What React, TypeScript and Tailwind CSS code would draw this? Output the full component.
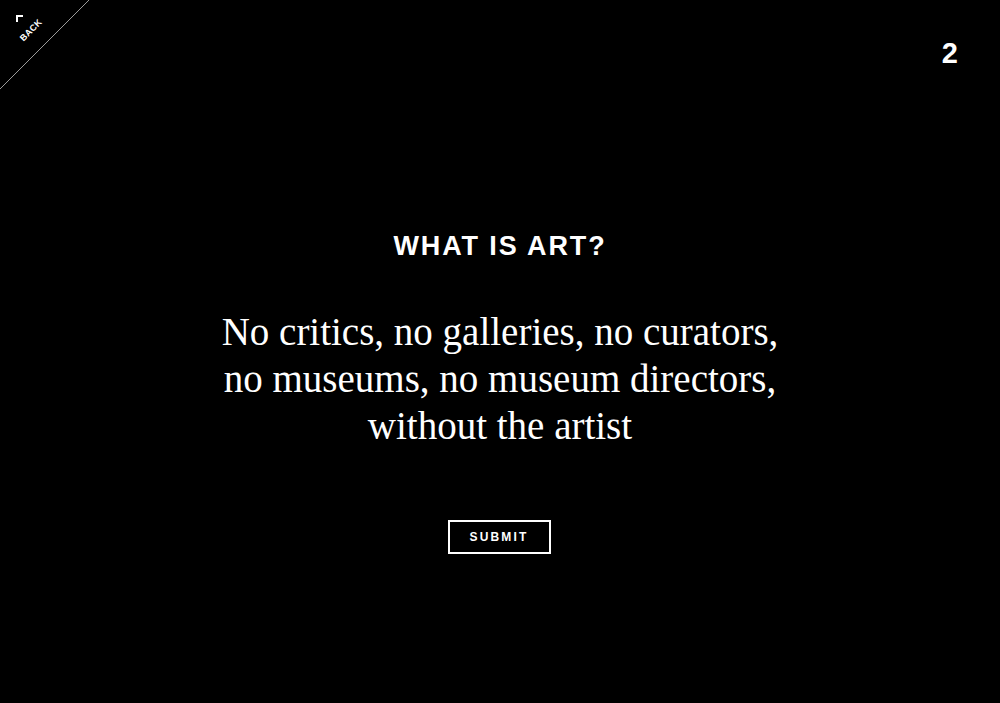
import React from "react";

const BackCorner = () => (
  <a href="#" className="absolute left-0 top-0 block h-[90px] w-[90px]">
    <svg width="90" height="90" viewBox="0 0 90 90" className="absolute left-0 top-0">
      <line x1="0" y1="89" x2="89" y2="0" stroke="#9a9a9a" strokeWidth="1" />
      <path d="M17 22 V16 H23" fill="none" stroke="#fff" strokeWidth="2" />
    </svg>
    <span
      className="absolute left-[18px] top-[24px] -rotate-45 text-[9px] font-bold tracking-[0.02em] text-white"
      style={{ fontFamily: '"Liberation Sans", Arial, sans-serif' }}
    >
      BACK
    </span>
  </a>
);

export default function App() {
  const sans = { fontFamily: '"Liberation Sans", Arial, sans-serif' };
  return (
    <div className="relative h-[703px] w-full overflow-hidden bg-black text-white">
      <BackCorner />
      <div className="flex justify-end pr-[42px] pt-[39px]">
        <span className="text-[29px] font-bold leading-none" style={sans}>
          2
        </span>
      </div>
      <main className="flex flex-col items-center pt-[165px]">
        <h1
          className="text-[27px] font-bold leading-none tracking-[0.07em]"
          style={sans}
        >
          WHAT IS ART?
        </h1>
        <p
          className="mt-[48px] text-center text-[39px] leading-[47px]"
          style={{ fontFamily: '"Liberation Serif", "Times New Roman", serif' }}
        >
          No critics, no galleries, no curators,
          <br />
          no museums, no museum directors,
          <br />
          without the artist
        </p>
        <button
          className="mt-[71px] h-[34px] w-[103px] -translate-x-px border-2 border-white text-[12px] font-bold tracking-[0.18em] text-white"
          style={sans}
        >
          SUBMIT
        </button>
      </main>
    </div>
  );
}
